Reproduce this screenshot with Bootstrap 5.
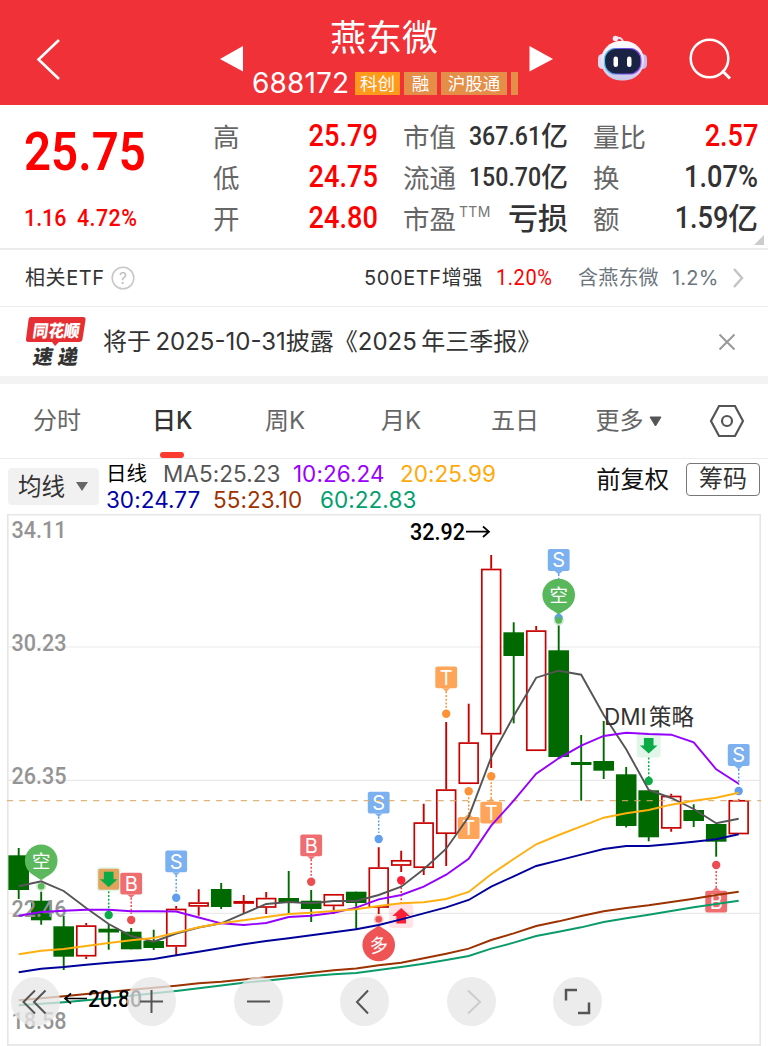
<!DOCTYPE html>
<html lang="zh-CN">
<head>
<meta charset="utf-8">
<meta name="viewport" content="width=device-width, initial-scale=1">
<title>燕东微 688172</title>
<link href="https://cdn.jsdelivr.net/npm/bootstrap@5.3.0/dist/css/bootstrap.min.css" rel="stylesheet">
<style>
body{font-family:Inter,"Noto Sans CJK SC",sans-serif;color:#333;width:768px;height:1046px;overflow:hidden;background:#fff}
.topbar{height:105px;background:#f03138;color:#fff;display:grid;grid-template-columns:220px 328px 40px 70px 110px}
.topbar svg{display:block}
.stock-name{font-size:36px;line-height:40px;height:52px;padding-top:18px}
.code-row{margin:17px 0 0 32px}
.code{font-size:28px;line-height:28px;letter-spacing:.15px;width:99px}
.tag{height:23px;line-height:23px;font-size:17.5px;background:#e48e47;flex:none;text-align:center;white-space:nowrap}
.tag-star{background:#ff9a1a}
.din{font-family:Roboto,"Noto Sans CJK SC",sans-serif;font-weight:500;display:inline-block;transform:scaleX(.89);transform-origin:0 50%;white-space:nowrap}
.din.end{transform-origin:100% 50%}
.up{color:#f00}
.quote{height:145px;border-bottom:2px solid #ececec;display:grid;grid-template-columns:164px 165px 165px 165px;column-gap:25px;padding-left:24px}
.price{font-size:54.500px;line-height:60px;margin-top:15px}
.price .din{font-weight:600;transform:scaleX(.87)}
.chg{font-size:24px;line-height:30px;margin-top:22px}
.stat{height:41px;font-size:26.5px;line-height:41px;white-space:nowrap}
.stat .lbl{color:#666}
.v30{font-size:30.5px;line-height:38px}.v26{font-size:26px;line-height:39px}
.yi{font-size:27px;line-height:39px;font-weight:500}
.ttm{font-size:14px;line-height:14px;letter-spacing:.3px;color:#777;margin:6px 0 0 3px;align-self:flex-start}
.etf{height:57px;border-bottom:1.5px solid #ececec;font-size:20px;padding-left:25px}
.news{height:69px;padding-left:25px;font-size:24px}
.band{height:8px;background:#f3f3f3}
.tabs{height:75px;border-bottom:1.5px solid #ececec;font-size:24px;color:#666}
.tabs>*{position:relative}
.tabs .on{color:#333;font-weight:500}
.tabs .on::after{content:"";position:absolute;left:8px;top:49px;width:24px;height:6px;border-radius:3px;background:#fb3a30}
.mabar{height:55px;padding:0 8px;font-size:22.5px}
.pick{width:91px;height:37px;margin-top:9px;background:#f1f1f1;border-radius:4px;font-size:23.5px;padding-left:10px;color:#333}
.ma-line{line-height:26px;height:26px;white-space:nowrap;letter-spacing:.08px}
.chip{width:74px;height:33px;border:1.5px solid #777;border-radius:4px;font-size:24px;line-height:29px;text-align:center}
.chart{height:532px}
.chart svg{display:block}
.tools{left:10.5px;bottom:20px;gap:57.5px}
.rnd{width:49px;height:49px;border-radius:50%;background:rgba(230,230,230,.77);border:0;padding:0}
.rnd:first-child{margin-right:10px}
</style>
</head>
<body>
<header class="topbar">
  <svg width="220" height="105" viewBox="0 0 220 105"><path d="M59 40 38.500 59.500 59 79" fill="none" stroke="#fff" stroke-width="2.600"/></svg>
  <div class="d-flex flex-column align-items-center position-relative">
    <div class="stock-name">燕东微</div>
    <div class="code-row d-flex align-items-center gap-1 align-self-start">
      <span class="code">688172</span>
      <span class="tag tag-star" style="width:45px">科创</span><span class="tag" style="width:33px">融</span><span class="tag" style="width:66px">沪股通</span><span class="tag" style="width:7px"></span>
    </div>
    <svg class="position-absolute" style="left:0;top:44px" width="24" height="30" viewBox="220 44 24 30"><path d="M220 59 243 46V71.500Z" fill="#fff"/></svg>
  </div>
  <svg width="40" height="105" viewBox="548 0 40 105" overflow="visible"><path d="M529.500 46 553 59 529.500 71.500Z" fill="#fff"/></svg>
  <svg width="70" height="105" viewBox="588 0 70 105">
    <defs><linearGradient id="shell" x2="0" y2="1"><stop stop-color="#fff"/><stop offset="1" stop-color="#c9c8e8"/></linearGradient>
    <linearGradient id="rim"><stop stop-color="#55c9ea"/><stop offset=".5" stop-color="#6747e6"/><stop offset="1" stop-color="#a052f0"/></linearGradient></defs>
    <path d="M616 38q7-1 7 5" fill="none" stroke="#e6e0f3" stroke-width="2"/><circle cx="615.500" cy="38.500" r="2.800" fill="#eee9f7"/>
    <rect x="598" y="54" width="9" height="15" rx="4.500" fill="#ddd8f0"/><rect x="638" y="54" width="9" height="15" rx="4.500" fill="#c6bfe8"/>
    <rect x="601" y="41" width="43" height="39.500" rx="19.500" fill="url(#shell)"/>
    <rect x="604.500" y="48.500" width="36.500" height="25.500" rx="11" fill="#1b2344" stroke="url(#rim)" stroke-width="1.200"/>
    <rect x="613.500" y="56.500" width="4.500" height="10.500" rx="2.200" fill="#fff"/><rect x="627" y="56.500" width="4.500" height="10.500" rx="2.200" fill="#fff"/>
  </svg>
  <svg width="110" height="105" viewBox="658 0 110 105"><circle cx="709.500" cy="58.500" r="18.800" fill="none" stroke="#fff" stroke-width="2.500"/><path d="m722 70.500 8 8" stroke="#fff" stroke-width="3"/></svg>
</header>

<section class="quote position-relative">
  <div><div class="price"><span class="din up">25.75</span></div>
    <div class="chg up d-flex"><span class="din" style="width:52.5px">1.16</span><span class="din" style="letter-spacing:.5px">4.72%</span></div></div>
  <div class="pt-2 mt-1">
    <div class="stat d-flex justify-content-between"><span class="lbl">高</span><span class="din end up v30">25.79</span></div>
    <div class="stat d-flex justify-content-between"><span class="lbl">低</span><span class="din end up v30">24.75</span></div>
    <div class="stat d-flex justify-content-between"><span class="lbl">开</span><span class="din end up v30">24.80</span></div>
  </div>
  <div class="pt-2 mt-1">
    <div class="stat d-flex justify-content-between"><span class="lbl">市值</span><span class="d-flex"><span class="din end v26">367.61</span><span class="yi">亿</span></span></div>
    <div class="stat d-flex justify-content-between"><span class="lbl">流通</span><span class="d-flex"><span class="din end v26">150.70</span><span class="yi">亿</span></span></div>
    <div class="stat d-flex"><span class="lbl">市盈</span><span class="ttm">TTM</span><span class="ms-auto" style="font-size:30px;line-height:38px;font-weight:500">亏损</span></div>
  </div>
  <div class="pt-2 mt-1">
    <div class="stat d-flex justify-content-between"><span class="lbl">量比</span><span class="din end up v30">2.57</span></div>
    <div class="stat d-flex justify-content-between"><span class="lbl">换</span><span class="din end v30">1.07%</span></div>
    <div class="stat d-flex justify-content-between"><span class="lbl">额</span><span class="d-flex"><span class="din end v30">1.59</span><span class="yi" style="font-size:30px">亿</span></span></div>
  </div>
  <svg class="position-absolute" style="right:4px;bottom:3px" width="10" height="10"><path d="M10 0V10H0Z" fill="#ccc"/></svg>
</section>

<section class="etf d-flex align-items-center text-nowrap">
  <span style="width:86px;letter-spacing:.6px">相关ETF</span>
  <svg width="24" height="24" viewBox="0 0 24 24"><circle cx="12" cy="12" r="10.800" fill="none" stroke="#c8c8c8" stroke-width="1.600"/><text x="12" y="17.500" font-size="15.500" text-anchor="middle" fill="#bbb">?</text></svg>
  <span style="width:132px;margin-left:229px;letter-spacing:.6px">500ETF增强</span>
  <span class="up" style="width:82px"><span class="din" style="font-size:22.5px;font-weight:400;letter-spacing:.6px">1.20%</span></span>
  <span class="text-secondary" style="width:94px;letter-spacing:.2px">含燕东微</span>
  <span class="text-secondary" style="width:61px;letter-spacing:.2px">1.2%</span>
  <svg width="11" height="22" viewBox="0 0 11 22"><path d="m1 2 8 9-8 9" fill="none" stroke="#c4c4c4" stroke-width="2.500"/></svg>
</section>

<section class="news d-flex align-items-center text-nowrap">
  <svg width="62" height="54" viewBox="25 314 62 54">
    <path d="M31 316H83q3 0 2.500 3l-3 19q-.4 3-3.500 3H59l-4 4-3-4H28.500q-3 0-2.500-3l2.500-19q.4-3 2.500-3Z" fill="#e62e33"/>
    <g font-family="Noto Sans CJK SC" font-weight="900"><text transform="translate(32 335.500) skewX(-8)" font-size="17" textLength="47" lengthAdjust="spacingAndGlyphs" fill="#fff">同花顺</text>
    <text transform="translate(32 362.500) skewX(-10)" font-size="20" textLength="45" fill="#333">速递</text></g>
  </svg>
  <span style="margin-left:16px;width:615px;word-spacing:-2.3px">将于 2025-10-31披露《2025 年三季报》</span>
  <svg width="18" height="18" viewBox="0 0 18 18"><path d="m1.500 1.500 15 15m0-15-15 15" stroke="#999" stroke-width="2"/></svg>
</section>
<div class="band"></div>

<nav class="tabs d-flex align-items-center text-nowrap">
  <span style="margin-left:33px;width:119px">分时</span><span class="on" style="width:113px">日K</span><span style="width:116px">周K</span><span style="width:110px">月K</span><span style="width:104.5px">五日</span><span style="width:53.5px">更多</span>
  <svg width="13" height="11" viewBox="0 0 13 11"><path d="M1 1H12L6.500 10Z" fill="#555" stroke="#555" stroke-linejoin="round"/></svg>
  <svg style="margin-left:47px" width="36" height="34" viewBox="0 0 36 34"><path d="M10 2H26L34 17 26 32H10L2 17Z" fill="none" stroke="#555" stroke-width="2.200"/><circle cx="18" cy="17" r="5" fill="none" stroke="#555" stroke-width="2.200"/></svg>
</nav>

<section class="mabar d-flex">
  <div class="pick d-flex align-items-center"><span style="width:58px">均线</span><svg width="12" height="9"><path d="M0 0H12L6 9Z" fill="#666"/></svg></div>
  <div style="margin:2px 0 0 7px;width:491px">
    <div class="ma-line d-flex"><span style="width:57px;color:#000;font-size:20.500px">日线</span><span style="width:130px;color:#555">MA5:25.23</span><span style="width:107px;color:#90f">10:26.24</span><span style="color:#ffaa0a">20:25.99</span></div>
    <div class="ma-line d-flex"><span style="width:107px;color:#00a">30:24.77</span><span style="width:107px;color:#a03200">55:23.10</span><span style="color:#00a06e">60:22.83</span></div>
  </div>
  <span style="width:90px;color:#111;font-size:24.3px;line-height:41px">前复权</span>
  <div class="chip flex-shrink-0" style="margin-top:4px">筹码</div>
</section>

<section class="chart position-relative">
  <svg id="kline" width="768" height="532" viewBox="0 514 768 532" font-family="Roboto"></svg>
  <div class="tools position-absolute d-flex">
    <button class="rnd"><svg width="49" height="49" fill="none" stroke="#555" stroke-width="2"><path d="M24 13.500 12.500 25 24 36.500M34.500 13.500 23 25 34.500 36.500"/></svg></button>
    <button class="rnd"><svg width="49" height="49" stroke="#555" stroke-width="2"><path d="M13 24.500H36M24.500 13V36"/></svg></button>
    <button class="rnd"><svg width="49" height="49" stroke="#555" stroke-width="2"><path d="M13 24.500H36"/></svg></button>
    <button class="rnd"><svg width="49" height="49" fill="none" stroke="#555" stroke-width="2"><path d="M28 13.500 17 25 28 36.500"/></svg></button>
    <button class="rnd"><svg width="49" height="49" fill="none" stroke="#ccc" stroke-width="2"><path d="M21 13.500 33 25 21 36.500"/></svg></button>
    <button class="rnd"><svg width="49" height="49" fill="none" stroke="#555" stroke-width="2.500"><path d="M13 23.500V13H24M36 25.500V36H25"/></svg></button>
  </div>
</section>

<script src="https://cdn.jsdelivr.net/npm/bootstrap@5.3.0/dist/js/bootstrap.bundle.min.js"></script>
<script>
const X = i => +(18.7 + 22.5 * i).toFixed(1);
const out = [];
// frame and grid
[647, 780.3, 913.3].forEach(y => out.push(`<path d="M8 ${y}H760" stroke="#e9e9e9" stroke-width="1.200"/>`));
out.push('<rect x="7.800" y="514.600" width="752.400" height="530.400" fill="none" stroke="#e6e6e6" stroke-width="1.700"/>');

// candles: direction, high, body top, body bottom, low
const candles = [
 ['g',848,855.3,890,899],['g',891.7,900.7,920.3,924.7],['g',916,926.3,956.7,970],['r',923,925.3,956.5,959],
 ['g',924,928.7,932.5,949.7],['g',928,931.7,949.3,949.3],['g',929.7,941,948,950],['r',906,908.7,946.7,955],
 ['r',889.3,902.3,906.7,915.7],['g',883,889,907,909],['r',895,901,903.8,913],['r',892,897.8,907.8,914],
 ['g',871,898,902.3,913],['g',890,900.7,909,922],['r',894,894,906.2,914],['g',891.7,891.7,903,929],
 ['r',847.3,867.3,907.8,914],['r',850.7,860,865.8,872],['r',803.7,822.3,868,875],['r',722,789.3,834,866],
 ['r',703.7,742.3,784,784],['r',555,568.7,734.5,768],['g',622.3,632.3,656,723.3],['r',626,630.3,751,751],
 ['g',625.5,650.3,757,758],['g',735,762,765,800.7],['g',721,761,770.7,779],['g',767,774.3,826,827.5],
 ['g',790,790.3,837.3,841.3],['r',793.7,795.7,828.7,831.7],['g',804.3,810,821,827],['g',824,824,841.7,856.7],
 ['r',799.3,800,834.3,834.3]];
candles.forEach(([c,h,t,b,l],i)=>{
  const x=X(i);
  if(c==='g') out.push(`<path d="M${x} ${h}V${l}" stroke="#006a00" stroke-width="1.900"/><rect x="${x-10.3}" y="${t}" width="20.600" height="${b-t}" fill="#006a00"/>`);
  else out.push(`<path d="M${x} ${h}V${t}M${x} ${b}V${l}" stroke="#c80000" stroke-width="1.900"/><rect x="${x-9.4}" y="${t+.8}" width="18.800" height="${Math.max(b-t-1.6,.8)}" fill="#fff" stroke="#c80000" stroke-width="1.700"/>`);
});

// price scale
[['34.11',538.3],['30.23',650.8],['26.35',783.8],['22.46',916.8],['18.58',1029.3]].forEach(([s,y])=>
  out.push(`<text x="11.500" y="${y}" font-size="24.500" font-weight="500" fill="#949494" textLength="55" lengthAdjust="spacingAndGlyphs">${s}</text>`));

// trade signals
const col={S:'#5f9fee',B:'#ec4d50',T:'#ff9236'};
function dotted(x,a,b,c){out.push(`<path d="M${x} ${a}V${b}" stroke="${c}" stroke-width="1.500" stroke-dasharray="2 1.700"/>`)}
function dot(x,y,c,r=4.2){out.push(`<circle cx="${x}" cy="${y}" r="${r}" fill="${c}"/>`)}
function flag(k,i,y,d){
  const x=X(i),c=col[k],s=d>y?1:-1;
  dotted(x,y+s*14,d-s*6,c);dot(x,d,c);
  out.push(`<g fill="${c}" opacity=".82"><rect x="${x-10.9}" y="${y-10.9}" width="21.800" height="21.800" rx="2"/><path d="M${x-4} ${y+s*10.9}h8l-4 ${s*3.5}Z"/></g><text x="${x}" y="${y+7.2}" font-family="Inter" font-size="20" text-anchor="middle" fill="#fff">${k}</text>`);
}
function balloon(t,i,y,s,c,d){
  const x=X(i);
  out.push(`<circle cx="${x}" cy="${d}" r="5" fill="${c}" opacity=".3"/>`);dot(x,d,c,3.3);
  out.push(`<path d="M${x-9} ${y+s*13.5}L${x} ${y+s*19.5}L${x+9} ${y+s*13.5}Z" fill="${c}"/><circle cx="${x}" cy="${y}" r="16.300" fill="${c}"/><text x="${x}" y="${y+6.8}" font-family="Noto Sans CJK SC" font-size="18.500" text-anchor="middle" fill="#fff" ${t==='多'?`transform="rotate(-8 ${x} ${y})"`:''}>${t}</text>`);
}
function arrow(i,y,s,c,bg,d){
  const x=X(i);dotted(x,y+s*12,d-s*4,c);dot(x,d,c);
  out.push(`<rect x="${x-12}" y="${y-12}" width="24" height="24" rx="3" fill="${c}" opacity=".12"/>`);
  if(bg) out.push(`<rect x="${x-10.5}" y="${y-10.5}" width="21" height="21" rx="2" fill="${bg}"/>`);
  out.push(`<path transform="translate(${x} ${y}) scale(1 ${s})" d="M-4.800-7.500h9.600V0h4L0 8-8.800 0h4Z" fill="${c}"/>`);
}
balloon('空',1,860.7,1,'#5cb85c',886.3);
arrow(4,879.3,1,'#0aab46','#e2a45d',915);
flag('B',5,883.7,920);flag('S',7,861.3,897.7);flag('B',13,845.3,881.7);flag('S',16,802.7,839);
balloon('多',16,945,-1,'#ef5455',919.3);
arrow(17,916,-1,'#ff1f36','',880.3);
flag('T',19,677.3,713.7);flag('T',20,828,791.3);flag('T',21,812.7,776.3);
flag('S',24,560,618);balloon('空',24,595,1,'#58b65b',620.5);
arrow(28,745.5,1,'#0aab46','',781);
flag('S',32,755,791);flag('B',31,901.7,865);

// last price
out.push('<path d="M7 800.700H761" stroke="#d9a866" stroke-opacity=".85" stroke-width="1.300" stroke-dasharray="6.200 6.100"/>');

// moving averages
const ma={
 '#555':[886.3,881.3,891,908,924,936,941.7,933.5,927.5,923.3,913.7,904,902,903.3,901,901,895,886.7,869.3,848.7,816.7,757.3,716,677.7,670.7,674.7,715,749.3,790,798,809,823.3,818.7],
 '#9600ff':[915.7,912,910.7,909.7,909.7,911.3,911.3,911.5,917.5,923.3,925,923,917,915.7,912.7,907.7,899.3,895,886.7,874.7,858.7,825.7,800.7,773.7,758.3,745.7,736,732.7,734,734.7,742.3,769.3,783.7],
 '#ffaf0f':[954.3,950.7,949,946,943,940.3,938,932.7,927.3,923.3,920.3,917,914,912.7,911,909.3,906,903.3,902.3,899,892,874.3,859,844.3,835,826.3,817.7,813.3,810,804.7,800.7,797.7,792.7],
 '#00009b':[972.3,968.7,967,964.7,962.7,961,959,955.3,951.7,948,944.3,941,938.3,935.3,932.3,929.3,925,919.3,913.3,907.3,900,886.7,876.3,866,860.3,854.7,849,846,846,844,841.7,839.3,834.3],
 '#9b3200':[1000.3,998.3,996.3,994,992,989.7,987.7,985.7,983.3,981.7,979.5,977.3,975.3,972.7,970.3,968.5,965.2,962.7,958.3,953.7,948.7,940,933.3,926,921.3,916,911.3,908,905.3,902,898.7,895,891.7],
 '#0a9b69':[1005.3,1003.8,1002.3,1000.3,998.3,995.7,993.3,991,988.3,985.5,982.7,980.7,978.3,976,974.3,973,970,967,963.7,960,956,948.7,942.7,936,931.7,927.3,922,918.3,914.7,911,907.3,904,900.7]};
for(const c in ma) out.push(`<polyline points="${ma[c].map((y,i)=>X(i)+','+y).join(' ')}" fill="none" stroke="${c}" stroke-width="1.900"/>`);

// extremes and strategy note
out.push('<text x="410" y="540.300" font-size="24.500" font-weight="500" fill="#000" textLength="55" lengthAdjust="spacingAndGlyphs">32.92</text><path d="M466 531.700H489M483 526.500 489 531.700 483 537" fill="none" stroke="#000" stroke-width="1.700"/>');
out.push('<text x="88" y="1007" font-size="24.500" font-weight="500" fill="#000" textLength="54" lengthAdjust="spacingAndGlyphs">20.80</text><path d="M87 998.500H65M71 993.300 65 998.500 71 1003.700" fill="none" stroke="#000" stroke-width="1.700"/>');
out.push('<text x="604" y="724.500" font-size="22.500" fill="#333" font-family="Inter">DMI</text><text x="649" y="724.500" font-size="22.500" fill="#333" font-family="Noto Sans CJK SC">策略</text>');
document.getElementById('kline').innerHTML=out.join('');
</script>
</body>
</html>
